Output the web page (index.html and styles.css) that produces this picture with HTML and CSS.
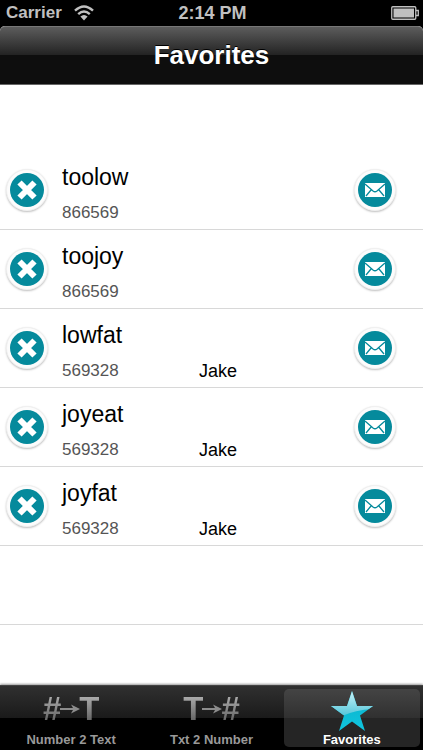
FILE: index.html
```html
<!DOCTYPE html>
<html lang="en">
<head>
  <meta charset="utf-8">
  <meta name="viewport" content="width=device-width, initial-scale=1">
  <title>Favorites</title>
  <link rel="stylesheet" href="styles.css">
</head>
<body>
  <!-- shared icons -->
  <svg class="sprites" aria-hidden="true">
    <symbol id="cross" viewBox="0 0 34 34">
      <path d="M9.5 9.5L24.5 24.5M24.5 9.5L9.5 24.5" stroke="#fff" stroke-width="6" fill="none"/>
    </symbol>
    <symbol id="mail" viewBox="0 0 34 34">
      <rect x="7" y="10" width="20" height="14" fill="#fff"/>
      <path d="M7 11L15 18Q17 19.5 19 18L27 11M8 23L13 17M26 23L21 17" stroke="#058a9c" stroke-width="1.3" fill="none"/>
    </symbol>
    <symbol id="arrow" viewBox="0 0 20 10">
      <path d="M0 4H13L11 0.5L20 5L11 9.5L13 6H0Z" fill="#8c8c8c"/>
    </symbol>
  </svg>

  <div class="status">
    <div class="carrier">
      <span>Carrier</span>
      <svg width="20" height="16" viewBox="0 0 20 16" aria-hidden="true">
        <path d="M1 5.6Q10 -2.8 19 5.6M4.2 9.2Q10 3.8 15.8 9.2" stroke="#c0c0c0" stroke-width="2.4" fill="none"/>
        <path d="M6.4 11.4Q10 8.4 13.6 11.4L10 15.4Z" fill="#c0c0c0"/>
      </svg>
    </div>
    <span class="time">2:14 PM</span>
    <div class="battery">
      <svg width="28" height="14" viewBox="0 0 28 14" aria-hidden="true">
        <rect x="0.75" y="0.75" width="24" height="12.5" rx="1" stroke="#c0c0c0" stroke-width="1.3" fill="none"/>
        <rect x="2.5" y="2.5" width="20.5" height="9" fill="#c0c0c0"/>
        <path d="M25 4.5H27.3V9.5H25" stroke="#c0c0c0" stroke-width="1.3" fill="none"/>
      </svg>
    </div>
  </div>

  <header class="navbar">
    <h1>Favorites</h1>
  </header>

  <main>
    <ul class="favorites">
      <li class="favorite">
        <button class="round" aria-label="Delete toolow"><svg><use href="#cross"/></svg></button>
        <div class="info">
          <span class="word">toolow</span>
          <span class="number">866569</span>
        </div>
        <button class="round" aria-label="Send toolow"><svg><use href="#mail"/></svg></button>
      </li>
      <li class="favorite">
        <button class="round" aria-label="Delete toojoy"><svg><use href="#cross"/></svg></button>
        <div class="info">
          <span class="word">toojoy</span>
          <span class="number">866569</span>
        </div>
        <button class="round" aria-label="Send toojoy"><svg><use href="#mail"/></svg></button>
      </li>
      <li class="favorite">
        <button class="round" aria-label="Delete lowfat"><svg><use href="#cross"/></svg></button>
        <div class="info">
          <span class="word">lowfat</span>
          <span class="number">569328</span>
          <span class="contact">Jake</span>
        </div>
        <button class="round" aria-label="Send lowfat"><svg><use href="#mail"/></svg></button>
      </li>
      <li class="favorite">
        <button class="round" aria-label="Delete joyeat"><svg><use href="#cross"/></svg></button>
        <div class="info">
          <span class="word">joyeat</span>
          <span class="number">569328</span>
          <span class="contact">Jake</span>
        </div>
        <button class="round" aria-label="Send joyeat"><svg><use href="#mail"/></svg></button>
      </li>
      <li class="favorite">
        <button class="round" aria-label="Delete joyfat"><svg><use href="#cross"/></svg></button>
        <div class="info">
          <span class="word">joyfat</span>
          <span class="number">569328</span>
          <span class="contact">Jake</span>
        </div>
        <button class="round" aria-label="Send joyfat"><svg><use href="#mail"/></svg></button>
      </li>
      <li class="favorite"></li>
    </ul>
  </main>

  <nav class="tabbar">
    <a class="tab" href="#">
      <span class="glyph" aria-hidden="true"><b>#</b><svg><use href="#arrow"/></svg><b>T</b></span>
      <span class="label">Number 2 Text</span>
    </a>
    <a class="tab" href="#">
      <span class="glyph" aria-hidden="true"><b>T</b><svg><use href="#arrow"/></svg><b>#</b></span>
      <span class="label">Txt 2 Number</span>
    </a>
    <a class="tab selected" href="#">
      <svg class="star" viewBox="0 0 42 40" aria-hidden="true">
        <defs>
          <linearGradient id="shine" x1="0" y1="0" x2="0" y2="1">
            <stop offset="0" stop-color="#c9f2f8"/>
            <stop offset="1" stop-color="#4fc4d8"/>
          </linearGradient>
          <linearGradient id="base" x1="0" y1="0" x2="0" y2="1">
            <stop offset="0" stop-color="#0ab0c8"/>
            <stop offset="1" stop-color="#10c5df"/>
          </linearGradient>
          <clipPath id="star-shape">
            <path d="M21 0L26 15H42L29 24.5L34 40L21 30.5L8 40L13 24.5L0 15H16Z"/>
          </clipPath>
        </defs>
        <g clip-path="url(#star-shape)">
          <rect width="42" height="40" fill="url(#base)"/>
          <path d="M0 0H42V18Q24 19 11 25L0 26Z" fill="url(#shine)"/>
        </g>
      </svg>
      <span class="label">Favorites</span>
    </a>
  </nav>
</body>
</html>
```

FILE: styles.css
```css
* {
  box-sizing: border-box;
}

html {
  background: #000;
}

body {
  margin: 0;
  min-height: 100vh;
  display: flex;
  flex-direction: column;
  font-family: "Liberation Sans", Helvetica, Arial, sans-serif;
  background: #fff;
  color: #000;
}

.sprites {
  display: none;
}

/* status bar */
.status {
  display: grid;
  grid-template-columns: 1fr auto 1fr;
  align-items: center;
  height: 26px;
  padding: 0 4px 0 6px;
  background: #000;
  color: #c0c0c0;
  font-size: 17px;
  font-weight: bold;
}

.carrier {
  display: flex;
  align-items: center;
  gap: 12px;
}

.time {
  font-size: 18px;
}

.battery {
  display: flex;
  justify-content: flex-end;
}

/* title bar */
.navbar {
  height: 59px;
  border-top: 1px solid #777;
  border-bottom: 1px solid #666;
  border-radius: 5px 5px 0 0;
  background: linear-gradient(#5c5c5c, #222 50%, #0e0e0e 50%, #0e0e0e);
  box-shadow: 0 -5px 0 #000;
}

h1 {
  margin: 0;
  color: #fff;
  font-size: 26px;
  line-height: 56px;
  text-align: center;
  text-shadow: 0 -1px 0 #000;
}

main {
  flex: 1;
  padding-top: 66px;
}

/* list */
.favorites {
  list-style: none;
  margin: 0;
  padding: 0;
}

.favorite {
  display: flex;
  align-items: center;
  height: 79px;
  padding: 0 27px 0 6px;
  border-bottom: 1px solid #d8d8d8;
}

.round {
  width: 42px;
  height: 42px;
  padding: 3px;
  border: 1px solid #f0f0f0;
  border-radius: 50%;
  background: #fcfcfc;
  box-shadow: 0 1px 2px rgba(0, 0, 0, 0.25);
}

.round svg {
  display: block;
  width: 100%;
  height: 100%;
  border-radius: 50%;
  background: #058a9c;
}

.info {
  flex: 1;
  display: grid;
  grid-template-columns: 137px 1fr;
  row-gap: 13px;
  align-items: end;
  padding: 7px 0 0 14px;
}

.word {
  grid-column: 1 / -1;
  font-size: 23px;
  line-height: 26px;
}

.number {
  color: #555;
  font-size: 17px;
  line-height: 20px;
}

.contact {
  font-size: 18px;
  line-height: 20px;
}

/* tab bar */
.tabbar {
  display: grid;
  grid-template-columns: repeat(3, 1fr);
  height: 65px;
  padding: 3px 1px;
  border-top: 1px solid #444;
  background: linear-gradient(#303030, #1a1a1a 32px, #000 32px);
  box-shadow: 0 -1px 2px rgba(0, 0, 0, 0.4);
}

.tab {
  display: flex;
  flex-direction: column;
  align-items: center;
  justify-content: space-between;
  margin: 0 2px;
  border-radius: 5px;
  color: #999;
  text-decoration: none;
}

.label {
  font-size: 13px;
  font-weight: bold;
  line-height: 15px;
}

.glyph {
  display: flex;
  align-items: center;
  height: 39px;
  font-size: 33px;
  line-height: 39px;
}

.glyph b {
  background: linear-gradient(#aaa 20%, #666 80%);
  background-clip: text;
  -webkit-background-clip: text;
  color: transparent;
}

.glyph svg {
  width: 20px;
  height: 10px;
  margin: 0 -1px;
}

.selected {
  background: linear-gradient(#444, #303030 29px, #252525 29px);
  color: #fff;
}

.star {
  width: 42px;
  height: 40px;
  margin-top: 2px;
}
```
